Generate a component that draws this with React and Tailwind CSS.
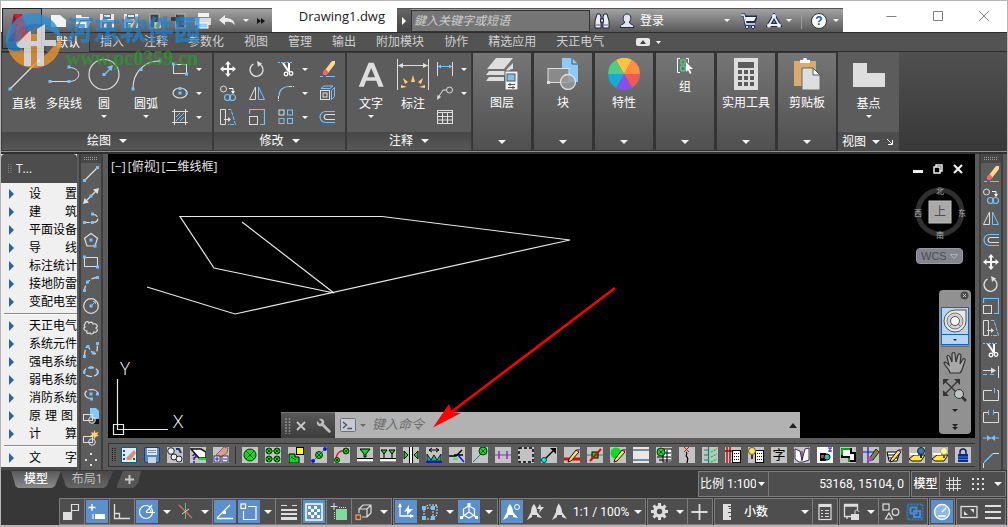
import React from "react";

const W = "#dedede";
const B = "#74c3ff";
const G = "#00e020";

function Svg({ s = 16, w, h, children, className = "" }) {
  return (
    <svg
      width={w || s}
      height={h || s}
      viewBox={`0 0 ${w || s} ${h || s}`}
      fill="none"
      className={`block shrink-0 ${className}`}
      aria-hidden="true"
    >
      {children}
    </svg>
  );
}

const Dot = ({ x, y, c = B, r = 3 }) => <rect x={x - r / 2} y={y - r / 2} width={r} height={r} fill={c} />;

function Down({ w = 8, c = "#f4f4f4" }) {
  const h = Math.round(w / 2);
  return (
    <Svg w={w} h={h}>
      <path d={`M0 0H${w}L${w / 2} ${h}Z`} fill={c} />
    </Svg>
  );
}

/* ---------- 16px tool glyphs ---------- */
const T = {
  line: <><path d="M1.5 14.5 14.5 1.5" stroke={W} strokeWidth="1.3" /><Dot x={1.5} y={14.5} /><Dot x={14.5} y={1.5} /></>,
  xline: <><path d="M2 14 14 2" stroke={W} strokeWidth="1.3" /><path d="M0 16 1.5 10 6 14.500ZM16 0 14.500 6 10 1.500Z" fill={W} /><Dot x={8} y={8} /></>,
  pline: <><path d="M1.500 12.500H10M9 4.500c7-1 8 8 1 8" stroke={W} strokeWidth="1.200" strokeDasharray="6 2" /><Dot x={1.5} y={12.5} /><Dot x={9.5} y={12.5} /><Dot x={9.5} y={4} /></>,
  polygon: <><path d="M8 1.500 14.500 6.300 12 14H4L1.500 6.300Z" stroke={W} strokeWidth="1.2" /><Dot x={8} y={8} /><Dot x={12} y={14} /></>,
  rect: <><rect x="1.500" y="3.500" width="13" height="9" stroke={W} /><Dot x={1.5} y={3} /><Dot x={14.5} y={13} /></>,
  arc: <><path d="M1.500 14.500C2 7 7 2 14.500 1.500" stroke={W} strokeWidth="1.2" strokeDasharray="5 2" /><Dot x={1.5} y={14.5} /><Dot x={4.5} y={6} /><Dot x={14.5} y={1.5} /></>,
  circle: <><circle cx="8" cy="8" r="7.300" stroke={W} strokeWidth="1.2" /><path d="M9 7l3-3M10 3.500h2.500V6" stroke={B} /><Dot x={8} y={8} /></>,
  cloud: <path d="M2 4c0-3 4-3 4-1 2-2 4 0 4 1 3-1 6 2 3 4 3 2 0 5-2 4-1 3-4 2-4 1-2 1-4 0-3-2-3 0-4-3-2-4-1-1-1-3 0-3Z" stroke={W} strokeWidth="1.2" />,
  spline: <><path d="M1.500 14C2 5 4 3 6 6s5 8 7 5 1-6 1.500-9" stroke={W} strokeWidth="1.2" strokeDasharray="6 2" /><Dot x={1.5} y={14.5} /><Dot x={5} y={4.5} /><Dot x={10.5} y={11} /><Dot x={14.5} y={1.5} /></>,
  ellipse: <><ellipse cx="8" cy="8" rx="7" ry="4.500" stroke={W} strokeWidth="1.2" strokeDasharray="6 2" /><Dot x={1} y={8} /><Dot x={15} y={8} /><Dot x={8} y={3.5} /></>,
  ellarc: <><path d="M8 12.500C0 12 0 4 8 3.500c4 0 7 2 7 5" stroke={W} strokeWidth="1.2" strokeDasharray="12 2" /><Dot x={8} y={8} /><Dot x={8.500} y={13} /><Dot x={14.5} y={8} /></>,
  insert: <><path d="M7 0h6l3 3v8H9L7 8Z" fill="#86c9fb" /><path d="M12 11h4v5h-5Z" fill="#111" /><rect x=".5" y="6.500" width="9" height="6" stroke={W} /><circle cx="9" cy="12" r="3.300" stroke={W} /></>,
  block: <><rect x=".5" y="6.500" width="9" height="6" stroke={W} /><circle cx="9" cy="12" r="3.300" stroke={W} /><path d="M11.500 0l1 3 3-1-1.500 2.500L16 6l-3 .5-1.500 2.500-1-2.500L7 6l2-1.500L8 2l2.500 1Z" fill="#ffd36b" /></>,
  point: <g fill={W}><rect x="7" y="1" width="2" height="2" /><rect x="2" y="7" width="2" height="2" /><rect x="12" y="7" width="2" height="2" /><rect x="7" y="12" width="2" height="2" /></g>,
  hatch: <><path d="M2.500 0v16M13.500 0v16M0 2.500h16M0 13.500h16" stroke={W} /><path d="M4 8l4-4M4 12l8-8M8 12l4-4" stroke={B} /></>,
  ellipse2: <><ellipse cx="8" cy="8" rx="7" ry="5" stroke={W} strokeWidth="1.2" /><Dot x={8} y={8} /><Dot x={15} y={8} /><Dot x={8} y={3.5} /></>,
  move: <path d="M8 0l3 3.500H9V7h3.500V5L16 8l-3.500 3V9H9v3.500h2L8 16l-3-3.500h2V9H3.500v2L0 8l3.500-3v2H7V3.500H5Z" fill="#f4f4f4" />,
  rotate: <><path d="M4.500 3A6.500 6.500 0 1 0 14 9.500C14 6 12 3.500 9.500 2.800" stroke={W} strokeWidth="1.300" /><path d="M8 0l5 2.500L9 6Z" fill={W} /></>,
  trim: <><path d="M0 1.500h14" stroke={B} strokeDasharray="2 1" /><path d="M5 2l6 9M11 2v9" stroke="#fff" strokeWidth="2" /><circle cx="8" cy="13" r="1.800" stroke="#fff" strokeWidth="1.300" /><circle cx="13" cy="12.500" r="1.800" stroke="#fff" strokeWidth="1.300" /></>,
  erase: <><path d="M1 15.500h3M7 15.500h9" stroke={B} /><path d="M6 9 13 0h3v3L9 12Z" fill="#ffd98a" /><path d="M4 10.500 6.500 8 10 11.500 7.500 14C5 15 3 13 4 10.500Z" fill="#f26a5e" /></>,
  copy: <><circle cx="3.500" cy="4" r="3" stroke={W} /><path d="M9 3.500h4V7" stroke="#fff" /><path d="M11 6h4l-2 3Z" fill="#fff" /><circle cx="7.500" cy="12.500" r="3" stroke={B} strokeWidth="1.200" /><circle cx="12.500" cy="12.500" r="3" stroke={B} strokeWidth="1.200" /></>,
  mirror: <><path d="M6.500 2v12.500h-6Z" stroke={W} /><path d="M9.500 2v12.500h6Z" stroke={B} /></>,
  fillet: <><path d="M1 11C1 5 5 1.500 11 1.500" stroke={B} strokeWidth="1.200" /><path d="M.5 11v5M11 1.500h5" stroke={W} strokeDasharray="3 1" /></>,
  explode: <><rect x="1.500" y="5.500" width="9" height="9" stroke={W} /><rect x="4" y="8" width="4" height="4" stroke={W} /><path d="M2 3.500 5 1h9l-3 2.500ZM12.500 5.500l3-3v9l-3 3Z" stroke={B} /></>,
  stretch: <><path d="M.5.500h5v15h-5ZM4 10.500h6" stroke={W} /><path d="M8 8l3 2.500L8 13Z" fill={W} /><path d="M8 .500h3l4.500 15H8" stroke={B} strokeDasharray="4 1" /></>,
  scale: <><path d="M.5 5V.500h15v15H11" stroke={B} strokeWidth="1.200" /><rect x=".5" y="7.500" width="8" height="8" stroke={W} /></>,
  array: <><rect x="1" y="1" width="5" height="5" stroke={W} /><rect x="9.500" y="1" width="5" height="5" stroke={B} /><rect x="1" y="9.500" width="5" height="5" stroke={B} /><rect x="9.500" y="9.500" width="5" height="5" stroke={B} /></>,
  offset: <><path d="M16 2.500H6.500a5.500 5.500 0 0 0 0 11H16" stroke={B} strokeWidth="1.200" /><path d="M16 5.500H7a2.600 2.600 0 0 0 0 5h9" stroke={W} strokeWidth="1.200" /></>,
  dim: <><path d="M.5 1v14M15.500 1v14" stroke={W} /><path d="M1 5.500h14" stroke={B} /><path d="M1 5.500l3-2v4ZM15 5.500l-3-2v4Z" fill={B} /></>,
  leader: <><circle cx="12.500" cy="5" r="3" stroke={W} /><path d="M9.500 5H6L1.500 12" stroke={W} /><path d="M0 15l.5-5L4 12Z" fill={W} /></>,
  table: <><rect x=".5" y="1.500" width="15" height="13" stroke={W} /><path d="M0 3.500h16M0 7.500h16M0 11h16M5.500 4v10M10.500 4v10" stroke={W} /></>,
  extend: <><path d="M15.500 2v12M0 6.500h9" stroke={W} /><path d="M8 3.500l5 3-5 3Z" fill={W} /><path d="M0 10.500h5M7 10.500h5" stroke={B} strokeDasharray="4 1" /></>,
  breakpt: <><path d="M9 4.500H.500v10h15v-10H14" stroke={W} /><path d="M11.500 2v5" stroke={B} /></>,
  brk: <><path d="M5 4.500H.500v10h15v-10H11" stroke={W} /><path d="M5.500 2v5M10.500 2v5" stroke={B} /></>,
  join: <><path d="M0 8h16" stroke={B} /><path d="M4 5l4 3-4 3ZM12 5 8 8l4 3Z" fill={B} /></>,
  chamfer: <><path d="M1 10.500 10 1.500" stroke={B} strokeWidth="1.200" /><path d="M10 1.500h6M.5 11v5" stroke={W} /></>,
};

function Tool({ n, label, className = "" }) {
  return (
    <button type="button" aria-label={label || n} className={`flex items-center justify-center ${className}`}>
      <Svg>{T[n]}</Svg>
    </button>
  );
}

/* ---------- title bar ---------- */
const Floppy = ({ c }) => (
  <><path d="M1 1h14v14H1Z" fill="#e8e8e8" /><rect x="4" y="1" width="8" height="5" fill="#707070" /><rect x="5" y="2" width="6" height="2" fill="#e8e8e8" /><rect x="3" y="9" width="10" height="6" fill="#7a7a7a" /><rect x="5" y="10" width="3" height="5" fill="#e8e8e8" />{c}</>
);
const pencil = <path d="M6 13 12 6l3 2-6 7H6Z" fill="#f5c469" stroke="#6a5a3a" strokeWidth=".5" />;

const quick = [
  ["新建", <path key="a" d="M0 2h9l6 5v7H0Z" fill="#f2f2f2" />],
  ["打开", <path key="a" d="M1 2h5l1 2h7v3H5l-3 7H1ZM6 8h10l-3 7H3Z" fill="#f2f2f2" />],
  ["保存", <Floppy key="a" />],
  ["另存为", <Floppy key="a" c={pencil} />],
  ["从移动设备打开", <g key="a"><rect x="3" y="1" width="9" height="14" fill="#404040" stroke="#bbb" /><path d="M7 9h7v6H7Z" fill="#f5c469" /></g>],
  ["保存到移动设备", <g key="a"><rect x="5" y="1" width="9" height="14" fill="#555" stroke="#bbb" /><path d="M0 4h5V1l5 5-5 5V8H0Z" fill="#3d3d3d" /></g>],
  ["打印", <g key="a"><rect x="3" y="0" width="11" height="4" fill="#f2f2f2" /><path d="M0 5h16v7H0Z" fill="#dadada" /><rect x="3" y="10" width="10" height="5" fill="#8cd0ff" stroke="#fff" /></g>],
  ["放弃", <path key="a" d="M0 7 6 2v3c6 0 9 2 10 7-3-3-5-4-10-3v3Z" fill="#ececec" />],
];

function TitleBar() {
  return (
    <div className="flex h-[31px] items-end bg-white">
      <div className="ml-px flex h-6 w-[270px] items-center border-t border-[#555] bg-gradient-to-b from-[#a3a3a3] to-[#5d5d5d] pl-[45px]">
        {quick.map(([l, g]) => (
          <button key={l} type="button" aria-label={l} className="flex h-5 w-[24px] items-center justify-center">
            <Svg>{g}</Svg>
          </button>
        ))}
        <button type="button" aria-label="放弃列表" className="ml-1"><Down w={6} /></button>
        <button type="button" aria-label="更多" className="ml-2">
          <Svg w={8} h={6}><path d="M0 0l4 3-4 3ZM4 0l4 3-4 3Z" fill="#111" /></Svg>
        </button>
      </div>
      <h1 className="flex h-full min-w-0 flex-1 items-center justify-end truncate pr-3 font-['Open_Sans','Noto_Sans_CJK_SC',sans-serif] text-[13px] text-[#1a1a1a]">
        Drawing1.dwg
      </h1>
      <div className="flex h-6 w-[446px] items-center border-t border-[#555] bg-gradient-to-b from-[#a3a3a3] to-[#585858]">
        <button type="button" aria-label="展开搜索" className="flex h-full w-[14px] items-center justify-center bg-gradient-to-b from-[#666] to-[#444]">
          <Svg w={4} h={8}><path d="M0 0l4 4-4 4Z" fill="#fff" /></Svg>
        </button>
        <input
          aria-label="搜索"
          placeholder="鍵入关键字或短语"
          className="h-[22px] w-[179px] border border-[#333] bg-[#757575] px-[2px] text-xs italic placeholder:text-[#cfcfcf]"
        />
        <button type="button" aria-label="查找" className="ml-1 w-4">
          <Svg><g stroke="#1e2533" fill="#e9ecf2"><path d="M3 1h3l1 3v11H1V8ZM10 1h3l2 7v7H9V4Z" /><rect x="6.500" y="6" width="3" height="3" /></g><path d="M2 12h4M10 12h4" stroke="#58627a" /></Svg>
        </button>
        <button type="button" className="ml-[9px] flex items-center gap-[5px] text-xs text-white">
          <Svg><path d="M1 14.500c0-3 3-3 4.500-4.500v-1C3 6 4 1 8 1s5 5 2.500 8v1c1.500 1.500 4.500 1.500 4.500 4.500Z" fill="#dfe5f0" stroke="#1e2a48" /></Svg>
          登录
        </button>
        <button type="button" aria-label="帐户" className="ml-auto"><Down w={6} /></button>
        <button type="button" aria-label="商店" className="ml-[11px]">
          <Svg><path d="M0 2h3l2 9h9M4 4h11l-2 5H5" stroke="#1c2b5a" strokeWidth="3" /><path d="M0 2h3l2 9h9" stroke="#f2f4fa" strokeWidth="1.300" /><path d="M4 4h11l-2 4H5Z" fill="#f2f4fa" /><circle cx="6" cy="14" r="1.600" fill="#fff" stroke="#1c2b5a" /><circle cx="12" cy="14" r="1.600" fill="#fff" stroke="#1c2b5a" /></Svg>
        </button>
        <button type="button" aria-label="Autodesk 应用" className="ml-[9px]">
          <Svg><path d="M8 3 3 12h10Z" stroke="#1c2b5a" strokeWidth="4" /><path d="M8 3 3 12h10Z" stroke="#eef1f8" strokeWidth="1.800" /><circle cx="8" cy="3" r="2" fill="#eef1f8" /><circle cx="3" cy="12.500" r="2" fill="#eef1f8" /><circle cx="13" cy="12.500" r="2" fill="#eef1f8" /></Svg>
        </button>
        <button type="button" aria-label="应用列表" className="ml-1"><Down w={6} /></button>
        <span className="ml-[9px] h-4 w-px bg-[#999]" />
        <button type="button" aria-label="帮助" className="ml-[9px] flex size-4 items-center justify-center rounded-full border border-[#333] bg-white font-['Liberation_Sans',sans-serif] text-xs font-bold text-[#1556c4]">?</button>
        <button type="button" aria-label="帮助列表" className="ml-[6px] mr-1"><Down w={6} /></button>
      </div>
      <div className="ml-[26px] flex h-full items-center">
        {[
          ["最小化", "M.5 6.500h10"],
          ["最大化", "M1.500 1.500h9v9h-9Z"],
          ["关闭", "M1 1l10 10M11 1 1 11"],
        ].map(([l, d]) => (
          <button key={l} type="button" aria-label={l} className="flex h-full w-[46px] items-center justify-center pb-[2px]">
            <Svg s={12}><path d={d} stroke="#808080" /></Svg>
          </button>
        ))}
      </div>
    </div>
  );
}

/* ---------- ribbon ---------- */
function Footer({ children }) {
  return (
    <button type="button" className="flex h-[18px] w-full items-center justify-center gap-2 bg-gradient-to-b from-[#474747] to-[#575757] text-xs leading-none text-white">
      {children}
      <Down />
    </button>
  );
}

function Big({ label, icon, arrow, className = "w-10" }) {
  return (
    <button type="button" className={`flex flex-col items-center pt-[6px] text-xs text-white ${className}`}>
      <Svg s={32}>{icon}</Svg>
      <span className="mt-[5px] whitespace-nowrap leading-4">{label}</span>
      {arrow && <span className="mt-[3px]"><Down w={6} /></span>}
    </button>
  );
}

function Small({ n, arrow = true }) {
  return (
    <div className="flex h-6 items-center">
      <Tool n={n} />
      {arrow ? <button type="button" aria-label="更多选项" className="ml-2 w-[6px]"><Down w={6} /></button> : <span className="ml-2 w-[6px]" />}
    </div>
  );
}

const big = {
  line: <><path d="M2 30 30 2" stroke={W} strokeWidth="1.300" /><Dot x={2} y={30} /><Dot x={31} y={1.5} /></>,
  pline: <><path d="M2 22.500h19M21 8.500c13 0 13 14 0 14" stroke={W} /><Dot x={2} y={22.5} /><Dot x={21} y={22.5} /><Dot x={21} y={8} /></>,
  circle: <><circle cx="16" cy="15.500" r="15" stroke={W} strokeWidth="1.200" /><path d="M16 16l6-6" stroke={B} strokeWidth="1.300" /><path d="M25 6l-1.500 6L19 8Z" fill={B} /><Dot x={16} y={15.5} /></>,
  arc: <><path d="M3 29C3 14 14 2 29 2" stroke={W} strokeWidth="1.200" /><Dot x={3} y={30} /><Dot x={11} y={10.5} /><Dot x={30} y={2} /></>,
  text: <path d="M13.500 2h6L31 30h-6l-2.500-7h-12L8 30H2ZM16.500 8 12 19h9Z" fill={W} fillRule="evenodd" transform="translate(2 2) scale(.86)" />,
  dim: <><path d="M.500 0v31M31.500 0v31M1 6.500h30" stroke={W} /><path d="M1 6.500l5-2.500v5ZM31 6.500 26 4v5Z" fill={W} /><path d="M14 23l2-7 2 7ZM8 25l-2-6 5 4ZM24 25l2-6-5 4ZM4 29v-3l6 2ZM28 29v-3l-6 2Z" fill="#ffd36b" /></>,
  layers: <><path d="M10 0h17l-9 11H1ZM3 13h16l8-8v4l-8 8H0ZM3 19h15v4H0ZM20 12l7-5v4Z" fill={W} /><rect x="19" y="13" width="13" height="19" fill="#f2f2f2" stroke="#5a5a5a" /><rect x="21" y="16" width="8" height="7" fill={B} stroke="#555" /><path d="M22 26.500h7M22 29.500h7M24 25v3M27 28v3" stroke="#555" /></>,
  block: <><path d="M15 0h10l6 6v18H15Z" fill="#8acbfb" /><path d="M25 0v6h6" stroke="#555" /><rect x="1" y="10.500" width="21" height="14" fill="#8a8a8a" stroke={W} /><circle cx="21" cy="24" r="7.500" fill="#9a9a9a" fillOpacity=".8" stroke={W} strokeWidth="1.300" /><rect x="0" y="23" width="3" height="3" fill={W} /></>,
  props: (
    <g>
      <path d="M16 16 8 2.100A16 16 0 0 1 24 2.100Z" fill="#ffc341" />
      <path d="M16 16 24 2.100A16 16 0 0 1 32 16Z" fill="#ff8f40" />
      <path d="M16 16H32A16 16 0 0 1 24 29.900Z" fill="#ec5a5a" />
      <path d="M16 16 24 29.900A16 16 0 0 1 8 29.900Z" fill="#8450f2" />
      <path d="M16 16 8 29.900A16 16 0 0 1 0 16Z" fill="#15aed0" />
      <path d="M16 16H0A16 16 0 0 1 8 2.100Z" fill="#4ccf82" />
    </g>
  ),
  calc: <><rect x="4" y="0" width="24" height="32" fill={W} /><path d="M8 4h16v6H8ZM8 12h4v4H8ZM14 12h4v4h-4ZM20 12h4v4h-4ZM8 18h4v4H8ZM14 18h4v4h-4ZM20 18h4v4h-4ZM8 24h4v4H8ZM14 24h4v4h-4ZM20 24h4v4h-4Z" fill="#5a5a5a" /></>,
  paste: <><rect x="3" y="3" width="22" height="25" fill="#d8ab70" /><path d="M9 2h3c0-3 4-3 4 0h3v3H9Z" fill="#fff" /><path d="M11 10h11l7 7v15H11Z" fill={W} stroke="#666" /><path d="M22 10v7h7Z" fill="#fff" stroke="#555" /></>,
  base: <path d="M0 4h14v10h18v14H0Z" fill={W} />,
};

const collapsed = [
  ["图层", "layers"], ["块", "block"], ["特性", "props"], ["组", null], ["实用工具", "calc"], ["剪贴板", "paste"],
];

const panel = "flex flex-col border border-[#3a3a3a] bg-[#5c5c5c]";

function Ribbon() {
  return (
    <div className="border-b-2 border-[#303030] bg-gradient-to-b from-[#505050] to-[#383838]">
      <div className="flex h-[99px]">
        <section className={`${panel} w-[212px]`}>
          <div className="flex flex-1 pl-[2px]">
            <Big label="直线" icon={big.line} />
            <Big label="多段线" icon={big.pline} />
            <Big label="圆" icon={big.circle} arrow />
            <Big label="圆弧" icon={big.arc} arrow className="w-[44px]" />
            <div className="ml-1 pt-1">
              <Small n="rect" /><Small n="ellipse2" /><Small n="hatch" />
            </div>
          </div>
          <Footer>绘图</Footer>
        </section>
        <section className={`${panel} w-[133px]`}>
          <div className="flex flex-1 pl-[6px] pt-1">
            <div className="w-[29px]"><Small n="move" arrow={false} /><Small n="copy" arrow={false} /><Small n="stretch" arrow={false} /></div>
            <div className="w-[29px]"><Small n="rotate" arrow={false} /><Small n="mirror" arrow={false} /><Small n="scale" arrow={false} /></div>
            <div className="w-[41px]"><Small n="trim" /><Small n="fillet" /><Small n="array" /></div>
            <div className="w-4"><Small n="erase" arrow={false} /><Small n="explode" arrow={false} /><Small n="offset" arrow={false} /></div>
          </div>
          <Footer>修改</Footer>
        </section>
        <section className={`${panel} w-[126px]`}>
          <div className="flex flex-1 pl-[3px]">
            <Big label="文字" icon={big.text} arrow className="w-[42px]" />
            <Big label="标注" icon={big.dim} className="w-[42px]" />
            <div className="ml-[3px] pt-1">
              <Small n="dim" /><Small n="leader" /><Small n="table" arrow={false} />
            </div>
          </div>
          <Footer>注释</Footer>
        </section>
        {collapsed.map(([label, k]) => (
          <section key={label} className="w-[61px] border border-r-2 border-[#343434] bg-gradient-to-b from-[#767676] to-[#505050]">
            <button type="button" className="flex h-full w-full flex-col items-center pb-[6px] pt-[5px] text-xs text-white">
              {k ? (
                <Svg s={32}>{big[k]}</Svg>
              ) : (
                <Svg><path d="M3 .500H.500v14H3M9 .500h2.500V5" stroke="#fff" /><rect x="4" y="2" width="4" height="4" stroke="#4ccf82" strokeWidth="1.300" /><circle cx="6" cy="10.500" r="2.500" stroke="#4ccf82" strokeWidth="1.300" /><path d="M9 4v10l2-2 2 4 1.500-1-2-4H16Z" fill="#fff" /></Svg>
              )}
              <span className="mt-[5px] whitespace-nowrap leading-4">{label}</span>
              <span className="mt-auto"><Down /></span>
            </button>
          </section>
        ))}
        <section className="flex w-[61px] flex-col bg-[#5c5c5c]">
          <div className="flex flex-1 justify-center pt-px"><Big label="基点" icon={big.base} arrow /></div>
          <div className="flex h-[19px] items-center bg-[#4d4d4d]">
            <button type="button" className="ml-1 flex items-center gap-[6px] text-xs text-white">视图 <Down /></button>
            <button type="button" aria-label="视图设置" className="ml-[7px]"><Svg s={6}><path d="M0 0l5 5M5.500 1v4.500H1" stroke="#fff" /></Svg></button>
          </div>
        </section>
      </div>
      <div className="h-px bg-[#8d8d8d]" />
    </div>
  );
}

/* ---------- workspace ---------- */
const menu = [
  "设 置", "建 筑", "平面设备", "导 线", "标注统计", "接地防雷", "变配电室", null,
  "天正电气", "系统元件", "强电系统", "弱电系统", "消防系统", "原 理 图", "计 算", null, "文 字",
];

function Palette() {
  return (
    <aside className="flex w-[76px] shrink-0 flex-col overflow-hidden bg-[#f0f0f0]">
      <div className="flex h-[29px] items-center rounded-t bg-[#4d4d4d] pl-[7px] font-['Open_Sans',sans-serif] text-xs text-[#eee]">
        <Svg w={4} h={10}><path d="M.500 0v10M3 0v10" stroke="#888" strokeDasharray="1 1" /></Svg>
        <span className="ml-1">T...</span>
      </div>
      <ul className="pt-[2px]">
        {menu.map((m, i) =>
          m === null ? (
            <li key={i} className="flex h-[6px] items-center pl-[3px]"><span className="h-[2px] w-full border-t border-[#8a8a8a] bg-white" /></li>
          ) : (
            <li key={m}>
              <button type="button" className="flex h-[18px] w-full items-center pl-2 text-xs text-black">
                <Svg w={5} h={10}><path d="M0 0l5 5-5 5Z" fill="#2a64a0" /></Svg>
                <span className={`ml-[15px] flex shrink-0 justify-between whitespace-nowrap ${m.split(" ").length === 3 ? "w-11" : "w-12"}`}>
                  {m.split(" ").map((c) => <span key={c}>{c}</span>)}
                </span>
              </button>
            </li>
          )
        )}
      </ul>
      <div className="mt-auto h-[3px] bg-[#4a4a4a]" />
    </aside>
  );
}

function VBar({ items, label }) {
  return (
    <div aria-label={label} role="toolbar" className="-mb-px flex w-6 shrink-0 flex-col items-stretch overflow-hidden border-x-2 border-[#3f3f3f] bg-[#5c5c5c]">
      <div className="flex h-[9px] items-center justify-center bg-[#474747]">
        <Svg w={14} h={4}><path d="M0 .500h14M0 2.500h14" stroke="#999" strokeDasharray="1 1" /></Svg>
      </div>
      {items.map((n) => <Tool key={n} n={n} className="h-[22px]" />)}
    </div>
  );
}

function CommandLine() {
  return (
    <form className="absolute bottom-0 left-[173px] right-[175px] flex h-[26px] bg-[#b2b2b2]">
      <div className="flex w-[54px] items-center border-t border-[#777] bg-gradient-to-b from-[#585858] to-[#3c3c3c] pl-1">
        <Svg w={6} h={16}><path d="M1 0v16M4.500 0v16" stroke="#8c8c8c" strokeWidth="1.500" strokeDasharray="2 1" /></Svg>
        <button type="button" aria-label="关闭命令行" className="ml-[5px]"><Svg s={10}><path d="M1 1l8 8M9 1 1 9" stroke="#c4c4c4" strokeWidth="2" /></Svg></button>
        <button type="button" aria-label="自定义" className="ml-[10px]">
          <Svg><path d="M3 1l3 3-2 2L1 3c-1 4 2 6 5 5l6 6c2 2 4 0 2-2L8 6c1-3-1-6-5-5Z" fill="#bdbdbd" /></Svg>
        </button>
      </div>
      <button type="button" aria-label="最近命令" className="ml-[5px] flex items-center gap-1">
        <Svg w={16} h={14}><rect x=".5" y=".5" width="15" height="13" rx="1" fill="#c5cad3" stroke="#6a7280" /><path d="M3 4l3.500 3L3 10M7.500 10.500H12" stroke="#4a525e" strokeWidth="1.300" /></Svg>
        <Down w={6} c="#666" />
      </button>
      <input aria-label="命令" placeholder="键入命令" className="ml-[6px] min-w-0 flex-1 bg-transparent text-[13px] italic outline-none placeholder:text-[#6c6c6c]" />
      <button type="button" aria-label="历史" className="mr-[3px]"><Svg w={8} h={5}><path d="M0 5h8L4 0Z" fill="#222" /></Svg></button>
    </form>
  );
}

function Compass() {
  return (
    <div className="absolute right-[8px] top-[31px]">
      <svg width="54" height="54" viewBox="0 0 54 54" className="block font-['Noto_Sans_CJK_SC',sans-serif] text-[8px]" aria-label="视图方位">
        <circle cx="27" cy="27" r="22" fill="none" stroke="#2f2f2f" strokeWidth="5" />
        <rect x="16" y="16" width="22" height="22" fill="#a9a9a9" stroke="#bdbdbd" />
        <g fill="#b4b4b4" textAnchor="middle"><text x="27" y="9">北</text><text x="5" y="31">西</text><text x="49" y="31">东</text><text x="27" y="53">南</text></g>
        <text x="27" y="31" fill="#4e4e4e" textAnchor="middle" className="text-[12px]">上</text>
      </svg>
    </div>
  );
}

function NavBar() {
  return (
    <div className="absolute right-1 top-[136px] flex h-[144px] w-8 flex-col items-center rounded bg-[#919191]">
      <button type="button" aria-label="关闭导航栏" className="mr-[2px] mt-px self-end">
        <Svg s={9}><circle cx="4.500" cy="4.500" r="4" fill="#4a4a4a" /><path d="M3 3l3 3M6 3 3 6" stroke="#ccc" /></Svg>
      </button>
      <div className="mt-[7px] w-7 border border-[#0f66c4] bg-[#b9d4f0]">
        <button type="button" aria-label="全导航控制盘" className="flex h-[27px] w-full items-center justify-center border-b border-[#0f66c4]">
          <Svg s={24}><path d="M12 1h11v11A11 11 0 1 1 12 1Z" fill="#e9e9e9" stroke="#555" /><circle cx="12" cy="12" r="8" fill="#d2d2d2" stroke="#777" /><circle cx="12" cy="12" r="4.500" fill="#f4f4f4" stroke="#555" /><path d="M6 18l3-3M18 18l-3-3" stroke="#777" /></Svg>
        </button>
        <button type="button" aria-label="控制盘列表" className="flex h-[9px] w-full items-center justify-center"><Down w={4} c="#222" /></button>
      </div>
      <span className="mt-px h-px w-7 bg-[#6e6e6e]" />
      <button type="button" aria-label="平移" className="mt-1">
        <Svg s={24}><path d="M7 22c0-3-5-7-6-10 1-2 3 0 5 2L4 6c0-2 2-2 3 0l2 5V3c0-2 3-2 3 0l1 8 2-7c1-2 3-1 3 1l-1 8 3-5c1-1 3 0 2 2-2 4-2 9-5 12Z" fill="#a8a8a8" stroke="#333" strokeWidth="1.200" /></Svg>
      </button>
      <button type="button" aria-label="范围缩放" className="mt-1">
        <Svg s={24}><path d="M2 2l13 13M15 2 2 15" stroke="#333" strokeWidth="1.300" /><path d="M0 0h6L0 6ZM17 0h-6l6 6ZM0 17v-6l6 6Z" fill="#333" /><circle cx="16" cy="15" r="4.500" fill="#bfc3c4" stroke="#333" /><path d="M19 18l4 4" stroke="#333" strokeWidth="2.500" /></Svg>
      </button>
      <button type="button" aria-label="缩放列表" className="mt-[6px]"><Down w={6} c="#222" /></button>
      <button type="button" aria-label="更多" className="mt-3"><Svg w={6} h={6}><path d="M0 0h6L3 3ZM0 3h6L3 6Z" fill="#222" /></Svg></button>
    </div>
  );
}

function Canvas() {
  return (
    <div className="relative min-h-[284px] flex-1 overflow-hidden bg-black">
      <svg className="absolute left-0 top-0 block h-full w-full" fill="none" aria-label="图形">
        <g stroke="#e8e8e8" strokeWidth="1.200">
          <path d="M134 68 226 139 106 114 72 62.500H274L462 86 127 160 39 133" />
          <path d="M5.500 270.500h10v10h-10ZM9.500 276v-51M10 275.500h50" />
        </g>
        <g fill="#fff" className="font-['Open_Sans',sans-serif] text-[19px] font-light">
          <text x="12" y="221">Y</text>
          <text x="65" y="274">X</text>
        </g>
      </svg>
      <div className="absolute left-[3px] top-[5px] flex gap-[2px] font-['Open_Sans','Noto_Sans_CJK_SC',sans-serif] text-xs leading-4 text-[#e4e4e4]">
        <button type="button">[−]</button><button type="button">[俯视]</button><button type="button">[二维线框]</button>
      </div>
      <div className="absolute right-3 top-[10px] flex items-center gap-[10px]">
        <button type="button" aria-label="最小化视口"><Svg s={10}><path d="M0 6h10v3H0Z" fill="#eee" /></Svg></button>
        <button type="button" aria-label="还原视口"><Svg s={10}><rect x="3" y="1" width="6" height="6" stroke="#eee" strokeWidth="1.500" /><rect x="1" y="3" width="6" height="6" fill="#000" stroke="#eee" strokeWidth="1.500" /></Svg></button>
        <button type="button" aria-label="关闭视口"><Svg s={10}><path d="M1 1l8 8M9 1 1 9" stroke="#eee" strokeWidth="2.200" /></Svg></button>
      </div>
      <Compass />
      <button type="button" className="absolute right-3 top-[94px] flex h-4 w-[47px] items-center justify-between rounded border border-[#9a9aa4] bg-[#85858f] px-1 font-['Liberation_Sans',sans-serif] text-[11px] text-[#4c4c54]">
        WCS
        <Svg w={8} h={5}><path d="M.500.500h7L4 4.500Z" stroke="#b0b0bb" /></Svg>
      </button>
      <NavBar />
      <CommandLine />
      <svg className="pointer-events-none absolute left-0 top-0 block h-full w-full" fill="none" aria-hidden="true">
        <path d="M507 134 342 259" stroke="#f00" strokeWidth="2.500" />
        <path d="M325 273.500 341 250l3 8 9 1Z" fill="#f00" />
      </svg>
    </div>
  );
}

/* ---------- drawing-plugin toolbar ---------- */
const Lamp = ({ x = 8, y = 8, r = 3 }) => (
  <g stroke="#003800"><circle cx={x} cy={y} r={r} fill={G} /><path d={`M${x - r * 0.6} ${y - r * 0.6}l${r * 1.2} ${r * 1.2}M${x + r * 0.6} ${y - r * 0.6}l${-r * 1.2} ${r * 1.2}`} /></g>
);
const Calc = () => <><rect x="7.500" y="3.500" width="8" height="12" fill="#fff" stroke="#000" /><path d="M9 6.500h5M9 9.500h5M9 12.500h5" stroke="#000" strokeDasharray="1 1" /></>;
const Pen = () => <><path d="M5 12 12 3l3 2-8 9-3 1Z" fill="#ffe34a" stroke="#111" /><path d="M12 2l3 3 1-3Z" fill="#a03aa0" /></>;
const Layer = () => <><path d="M0 12 5 8h11l-4 6H3Z" fill="#ffeb3b" stroke="#111" /><path d="M1 7h8" stroke="#fff" strokeWidth="2" /></>;

const draw1 = [
  <><rect x=".5" y=".5" width="15" height="15" fill="#dceefa" stroke="#0b5a94" /><path d="M2 3h2v2H2ZM2 7h2v2H2ZM2 11h2v2H2ZM12 11h2v2h-2Z" fill="#0b5a94" /><path d="M5 11 13 3l2 3-5 7H6Z" fill="#dc8e76" /></>,
  <><path d="M.5.500h15v15h-15Z" fill="#4f86c6" stroke="#1b3d78" /><rect x="3" y="1" width="10" height="7" fill="#dbe6f4" /><rect x="4" y="10" width="8" height="6" fill="#cfd4dc" /><path d="M4 3.500h8M4 5.500h8" stroke="#7f94b4" /></>,
  <><circle cx="4" cy="4" r="3.300" fill="#e8eef4" stroke="#222" /><path d="M9 2h3l2 4" stroke="#143a6b" strokeWidth="2" /><circle cx="7" cy="10" r="3" fill="#e8eef4" stroke="#222" /><circle cx="12" cy="12" r="3" fill="#e8eef4" stroke="#222" /></>,
  <><path d="M1 2h10l5 3v6H9Z" fill="#fff" stroke="#111" strokeWidth="1.500" /><path d="M9 11h7v2H9Z" fill={G} /><path d="M3 9c0-2 4-2 3 1l-2 1v2M4 14v2" stroke="#1b1be0" strokeWidth="1.500" /></>,
  <><path d="M3 8 11 0l4 1-1 5-6 4Z" fill="#dc9c90" stroke="#865" /><rect x="1" y="9" width="6" height="6" fill="#f0f0ff" stroke="#334" /><rect x="9" y="9" width="6" height="6" fill="#f0f0ff" stroke="#334" /><path d="M2 12h4M4 10v4M10 12h4" stroke="#22c" /></>,
];
const draw2 = [
  <Lamp x={8} y={8} r={6} />,
  <><path d="M4 4h8M4 12h8" stroke="red" /><Lamp x={4} y={4} /><Lamp x={12} y={4} /><Lamp x={4} y={12} /><Lamp x={12} y={12} /></>,
  <><rect x="8.500" y=".5" width="7" height="7" fill="#ff0" stroke="#000" /><path d="M1 7h6v3h4v6H1Z" fill={G} stroke="#000" /><path d="M3 10l5 3" stroke="#000" /></>,
  <><path d="M2 14 14 2" stroke="#088" /><Lamp x={8} y={8} r={3.5} /><circle cx="14" cy="2" r="2" fill="#11e" /><circle cx="2" cy="14" r="2" fill="#11e" /></>,
  <><path d="M2 12C3 5 7 3 12 4" stroke="#e01010" strokeWidth="1.500" /><Lamp x={12} y={4} /><Lamp x={3} y={13} r={2.5} /></>,
  <><path d="M3 2h10L9 7v3H7V7Z" fill={G} stroke="#000" /><path d="M0 11.500h16M0 15h16" stroke="#000" /><path d="M0 13.300h16" stroke="#fff" strokeWidth="2" /></>,
  <><path d="M1 3h6L4 7ZM9 3h6l-3 4Z" fill={G} stroke="#000" /><path d="M4 6v5M12 6v5M0 11.500h16M0 15h16" stroke="#000" /><path d="M0 13.300h16" stroke="#fff" strokeWidth="2" /></>,
  <><path d="M6.500 0v16M9.500 0v16" stroke="#000" /><path d="M7 0h2v16H7Z" fill="#fff" /><path d="M1 4v8l4-4ZM15 4v8l-4-4Z" fill={G} stroke="#000" /></>,
  <><path d="M3 3h10M3 3l3-2M3 3l3 2M13 3l-3-2M13 3l-3 2" stroke="#000" /><path d="M1 7l4 6 3-5 3 5 4-6v7H1Z" fill="#18c060" stroke="#113" /><path d="M0 15h16" stroke="#11e" strokeWidth="2" /></>,
  <><path d="M0 9h7l6-6M5 8h9" stroke="#000" strokeWidth="1.500" /><path d="M9 8l6 7" stroke="#11e" strokeWidth="1.500" /><path d="M4 12h5" stroke={G} /></>,
  <><path d="M1 15 11 5" stroke="#088" /><Lamp x={11} y={4} r={4} /></>,
  <><path d="M0 8h16" stroke="#088" /><path d="M4 4v8M12 4v8" stroke="#d0d" strokeWidth="1.500" /></>,
  <rect x="1" y="1" width="14" height="14" stroke="#000" strokeWidth="1.500" strokeDasharray="3 2" />,
  <><path d="M4 12l9-9" stroke="#000" strokeWidth="1.500" /><path d="M15 1v6L9 1Z" fill="#000" /><circle cx="3" cy="13" r="2.500" fill="#0ee" stroke="#044" /></>,
  <><path d="M0 12h16" stroke="#e00" strokeWidth="3" /><Pen /></>,
  <><path d="M0 8h16" stroke="#088" /><rect x="5" y="5" width="6" height="6" fill={G} stroke="#000" /><path d="M3 14 14 2" stroke="#e00" strokeWidth="2" /></>,
  <><circle cx="6" cy="6" r="5.500" fill={G} /><Pen /></>,
  <><rect width="16" height="16" fill="#eee6dc" /><path d="M0 3h16M0 13h16" stroke="#6c8cb0" strokeWidth="2" /></>,
  <><rect x="7" y="2" width="9" height="13" fill="#fff" stroke="#000" /><path d="M1 10h14M3 13h12M11 3v12M7 6h8" stroke="#000" /><Lamp x={5} y={5} r={4} /></>,
  <><path d="M7 5c3 2-2 3 1 5 2 2 0 4 0 6" stroke="#000" strokeWidth="1.200" /><path d="M5 0l5 5M10 0 5 5" stroke="#e00" /></>,
  <><path d="M2 3h5M2 8h5M2 13h5M6.500 0v16" stroke="#088" strokeWidth="1.200" /><path d="M9 5l6-3M9 10l6-3M9 15l6-3" stroke={G} strokeWidth="1.500" strokeDasharray="2 1" /></>,
  <><path d="M2 0v16M5 0v16M0 4h9" stroke="#900" strokeWidth="1.300" /><Calc /></>,
  <><Calc /><circle cx="4" cy="4" r="3.500" fill="#ffe34a" stroke="#554" /><path d="M4 8v4" stroke="#333" strokeWidth="2" /></>,
  null,
  <><path d="M1 2l5 2 2 9 3-11 4-1v12l-6 2H5l-4-3Z" fill="#fff" stroke="#425" /><path d="M8 4v10" stroke="#425" /></>,
  <><rect width="16" height="16" fill="#fff" /><path d="M3 6h6v8H3Z" fill="#000" /><path d="M4 8h3v3H4Z" fill="#e33" /><circle cx="10" cy="10" r="3" fill="#0cc" stroke="#000" /><path d="M11 1h4M11 4h4M13 1v4" stroke="#11e" /></>,
  <><path d="M2 2h9v4h4v8H9v-4H2Z" stroke="#000" strokeWidth="2" fill="#fff" /><path d="M2 8V2h8M9 11v4" stroke={G} strokeWidth="1.500" /></>,
  <><path d="M5 0v16M0 5h16" stroke="#11e" strokeWidth="1.200" /><path d="M6 12 13 2l3 3-6 8Z" fill="#7a8a2a" stroke="#222" /><circle cx="7" cy="12" r="2.500" fill="#a050b0" /></>,
  <><path d="M1 5h13l-3 9H3Z" fill="#fff" stroke="#000" /><path d="M1 8h12M2 11h10" stroke="#000" /><Pen /></>,
  <><Layer /><circle cx="12" cy="4" r="3.500" fill="#3a76a8" stroke="#123" /><path d="M12 8v3" stroke="#123" strokeWidth="2" /></>,
  <><Layer /><circle cx="12" cy="4" r="3.500" fill="#fff79a" stroke="#aa8" /><path d="M12 8v3" stroke="#554" strokeWidth="2" /></>,
  <><path d="M5 7V5c0-4 6-4 6 0v2" stroke="#0b2270" strokeWidth="1.500" /><rect x="3" y="7" width="10" height="8" fill="#0b2a90" /><path d="M3 10h10M3 12.500h10" stroke="#5ad" strokeWidth=".7" /></>,
];

function Sq({ g, i }) {
  return (
    <button type="button" aria-label={g ? `电气工具 ${i}` : undefined} className="flex size-4 shrink-0 items-center justify-center bg-[#c3c3c3] text-[13px] leading-4 text-black">
      {g ? <Svg>{g}</Svg> : "字"}
    </button>
  );
}

function PluginBar() {
  return (
    <div role="toolbar" aria-label="电气" className="mb-[3px] mt-[5px] flex h-6 items-center gap-[7px] overflow-hidden border-y border-l border-[#333] bg-[#5c5c5c] pl-[3px]">
      <Svg w={4} h={14} className="-mr-[2px]"><path d="M.500 0v14M3 0v14" stroke="#111" strokeDasharray="1 1" /></Svg>
      {draw1.map((g, i) => <Sq key={i} g={g} i={i + 1} />)}
      <span className="-mx-px h-[18px] w-px shrink-0 border-l border-[#333] bg-[#888]" />
      {draw2.map((g, i) => <Sq key={i} g={g} i={i + 6} />)}
    </div>
  );
}

/* ---------- status ---------- */
const S = {
  model: <><path d="M0 9h9v8H0Z" fill={W} /><path d="M8.500 17V1.500h7v6h-7" stroke={W} strokeWidth="1.200" /></>,
  infer: <><path d="M4 1v7M.500 4.500h7" stroke="#fff" strokeWidth="1.300" /><rect x="7" y="11" width="10" height="5" fill="#fff" /><path d="M5 11v5" stroke="#fff" /></>,
  ortho: <path d="M1.500 1v14.500H17M1.500 10.500h5v5" stroke={W} strokeWidth="1.300" />,
  polar: <><circle cx="8" cy="9" r="6.500" stroke="#fff" strokeWidth="1.200" /><path d="M8 9.500h9M8 9l6-7" stroke="#fff" strokeWidth="1.200" /><path d="M11 6c2 1 2 3 2 4" stroke="#fff" /></>,
  iso: <><path d="M8.500 0v16" stroke="#4ccf6c" /><path d="M2 2l13 13" stroke="#e06a6a" strokeWidth="1.200" /><path d="M5 11l7-5" stroke={W} /></>,
  track: <><path d="M1 15.500h16M1 15 14 2" stroke="#fff" strokeWidth="1.300" /><rect x="7" y="8" width="3" height="3" fill="#fff" /></>,
  osnap: <><path d="M8 3.500h8v13H3.500V8" stroke="#fff" strokeWidth="1.200" /><rect x="1" y="1" width="4.500" height="4.500" stroke="#fff" strokeWidth="1.200" /></>,
  lwt: <path d="M1 2h16v1H1ZM1 6h16v2H1ZM1 10h16v2H1ZM1 14h16v3H1ZM6 2h1v1h5V2Z" fill={W} />,
  trans: <><rect x="1" y="1" width="16" height="16" stroke="#fff" strokeWidth="1.500" /><path d="M3 3h3v3H3ZM9 3h3v3H9ZM6 6h3v3H6ZM12 6h3v3h-3ZM3 9h3v3H3ZM9 9h3v3H9ZM6 12h3v3H6ZM12 12h3v3h-3Z" fill="#fff" /></>,
  cycle: <><path d="M4 0v7M.500 3.500h7" stroke={W} /><rect x="6" y="6" width="11" height="11" fill="#7fdc9f" /><path d="M9 4.500h8M4.500 9v8" stroke={W} strokeDasharray="1 1" /></>,
  osnap3d: <><path d="M4 6h8v8H7M4 10V6l4-4h8v8l-4 4M12 6l4-4" stroke={W} strokeWidth="1.200" /><rect x="1" y="12" width="4.500" height="4.500" stroke="#f09a50" strokeWidth="1.300" /></>,
  ducs: <><path d="M3 1v12h13" stroke="#fff" strokeWidth="1.300" /><path d="M1 4l2-4 2 4ZM13 11l4 2-4 2Z" fill="#fff" /><path d="M7 9l5-7v4h4l-6 6V8Z" fill="#fff" /></>,
  filter: <><path d="M3 5h9v11H3ZM3 5l4-3h9v10l-4 4M12 5l4-3" stroke={W} strokeDasharray="2 1" /><Dot x={3} y={5} r={4} /><Dot x={12} y={5} r={4} /><Dot x={3} y={15} r={4} /><Dot x={12} y={15} r={4} /></>,
  gizmo: <><path d="M9 1v8l7 5M9 9l-7 5" stroke="#fff" strokeWidth="1.200" /><path d="M9 3 14.500 6v6L9 15l-5.500-3V6Z" stroke="#fff" strokeWidth="1.200" /><rect x="7.500" y="0" width="3" height="3" fill="#fff" /><rect x="0" y="13" width="3" height="3" fill="#fff" /><rect x="15" y="13" width="3" height="3" fill="#fff" /></>,
  annoA: <><path d="M7 1c3 4 3 7 3 8l5 6-5-1v-2H5v2l-5 3 4-8c0-3 1-6 3-8Z" fill="#fff" /><circle cx="14" cy="4" r="2.500" stroke="#fff" /></>,
  annoB: <><path d="M7 1c3 4 3 7 3 8l5 6-5-1v-2H5v2l-5 3 4-8c0-3 1-6 3-8Z" fill={W} /><path d="M13 1l-3 5h3l-1 4 5-6h-3Z" fill={W} /></>,
  annoC: <path d="M8 1c3 4 3 7 3 8l5 7-5-2v-2H6v2l-5 3 4-8c0-3 1-6 3-9Z" fill={W} />,
  gear: <><circle cx="8.500" cy="8.500" r="4.500" stroke={W} strokeWidth="3.500" /><path d="M8.500 0v3M8.500 14v3M0 8.500h3M14 8.500h3M2.500 2.500l2 2M12.500 12.500l2 2M2.500 14.500l2-2M12.500 4.500l2-2" stroke={W} strokeWidth="3" /></>,
  plus: <path d="M8.500 1v16M.500 9h16" stroke={W} strokeWidth="1.800" />,
  ruler: <path d="M5 1h8v2h-3v1h3v1h-2v1h2v3h-3v1h3v3h-2v1h2v3H5Z" fill={W} />,
  qprop: <><rect x="3" y="1.500" width="12" height="15" stroke={W} strokeWidth="1.200" /><path d="M3 3h12" stroke={W} strokeWidth="2" /><path d="M5 7.500h2M5 10.500h2M5 13.500h2M9 7.500h4M9 10.500h4M9 13.500h4" stroke={W} /></>,
  lockui: <><path d="M8 13.500H1.500v-12h13V7M1 3h14M4 14v2" stroke={W} strokeWidth="1.300" /><rect x="8" y="11" width="8" height="6" fill={W} /><path d="M12 11V8c0-1 4-1 4 1" stroke={W} /></>,
  isolate: <><rect x="1" y="1" width="6" height="6" stroke={W} strokeWidth="1.200" /><circle cx="13.500" cy="9" r="3.300" stroke={W} strokeWidth="1.200" /><path d="M7 10l3.500 6h-7Z" stroke={W} strokeWidth="1.200" /></>,
  hw: <><rect x="1.500" y="1.500" width="15" height="15" stroke="#2f7cc4" strokeWidth="2" strokeDasharray="2 1" /><rect x="4.500" y="4.500" width="6" height="6" stroke="#3b8fdd" strokeWidth="2" /><rect x="8" y="8" width="6" height="6" stroke="#3b8fdd" strokeWidth="2" /></>,
  perf: <><circle cx="9" cy="9" r="7.500" fill="#8fb7e2" stroke="#fff" strokeWidth="1.300" /><path d="M9 9l4-4M5 13h8" stroke="#fff" strokeWidth="1.300" /></>,
  clean: <><rect x="1" y="3.500" width="16" height="11" stroke={W} strokeWidth="1.300" /><path d="M10 6h4v4ZM4 8v4h4Z" fill={W} /></>,
  ham: <path d="M1 3h16M1 9h16M1 15h16" stroke={W} strokeWidth="2" />,
  grid: <path d="M5.500 2v14M9.500 2v14M13.500 2v14M2 5.500h15M2 9.500h15M2 13.500h15" stroke={W} />,
  snap: <g fill={W}><path d="M3 3h2v2H3ZM8 3h2v2H8ZM13 3h2v2h-2ZM3 8h2v2H3ZM8 8h2v2H8ZM13 8h2v2h-2ZM3 13h2v2H3ZM8 13h2v2H8ZM13 13h2v2h-2Z" /></g>,
};

function Cell({ n, on, br, className = "w-6" }) {
  return (
    <button
      type="button"
      aria-label={n}
      aria-pressed={!!on}
      className={`flex items-center justify-center p-px ${br ? "border-r border-[#7d7d7d]" : ""} ${className}`}
    >
      <span className={`flex h-full w-full items-center justify-center ${on ? "bg-[#5c90cc]" : ""}`}>
        <Svg s={18}>{S[n]}</Svg>
      </span>
    </button>
  );
}
function Arrow({ className = "w-[15px]", br }) {
  return (
    <button type="button" aria-label="选项" className={`flex items-center justify-center ${br ? "border-r border-[#7d7d7d]" : ""} ${className}`}>
      <Down w={8} />
    </button>
  );
}
const Group = ({ children }) => <div className="flex h-full shrink-0 border border-[#7d7d7d] bg-[#4e4e4e]">{children}</div>;
const selectCls = "appearance-none border-0 bg-transparent text-xs text-white outline-none";

function Status() {
  return (
    <footer className="bg-[#373737] text-xs text-white">
      <div className="flex h-7 items-start">
        <nav className="flex pl-[10px] pt-px">
          <button type="button" className="h-[17px] w-[50px] bg-gradient-to-b from-[#5a5a5a] to-[#8a8a8a] font-medium leading-[17px] [clip-path:polygon(0_0,100%_0,88%_88%,82%_100%,14%_100%,9%_88%)]">模型</button>
          <button type="button" className="h-[17px] w-[52px] bg-gradient-to-b from-[#484848] to-[#666] leading-[17px] text-[#bdbdbd] [clip-path:polygon(0_0,100%_0,88%_88%,82%_100%,14%_100%,9%_88%)]">布局1</button>
          <button type="button" aria-label="新建布局" className="ml-1 flex h-[17px] w-6 items-center justify-center bg-[#555] [clip-path:polygon(25%_0,100%_0,88%_70%,70%_100%,0_100%,0_85%)]">
            <Svg s={9}><path d="M4.500 0v9M0 4.500h9" stroke="#c8c8c8" strokeWidth="2" /></Svg>
          </button>
        </nav>
        <div className="ml-auto mr-px flex h-full pb-px pt-px">
          <Group>
            <label className="flex w-[70px] items-center border-r border-[#7d7d7d] pl-px">
              <select aria-label="比例" className={`${selectCls} w-14`}><option>比例 1:100</option></select>
              <span className="ml-[2px]"><Down w={7} /></span>
            </label>
            <output className="flex w-[140px] items-center justify-end pr-[5px] text-xs">53168, 15104, 0</output>
          </Group>
          <div className="w-px" />
          <Group>
            <button type="button" className="w-[28px] border-r border-[#7d7d7d] font-medium">模型</button>
            <Cell n="grid" className="w-[25px]" /><Cell n="snap" className="w-[25px]" /><Arrow />
          </Group>
        </div>
      </div>
      <div className="mr-px flex h-[27px] justify-end gap-px overflow-hidden">
        <Group>
          <Cell n="model" br className="w-[25px]" /><Cell n="infer" on br className="w-[25px]" /><Cell n="ortho" br className="w-[25px]" />
          <Cell n="polar" on /><Arrow /><Cell n="iso" /><Arrow br />
          <Cell n="track" on /><Cell n="osnap" on br={false} /><Arrow br />
          <Cell n="lwt" br className="w-[26px]" /><Cell n="trans" on br className="w-[25px]" /><Cell n="cycle" br className="w-[25px]" />
          <Cell n="osnap3d" /><Arrow />
        </Group>
        <Group>
          <Cell n="ducs" on /><Cell n="filter" /><Arrow /><Cell n="gizmo" on /><Arrow className="w-4" />
        </Group>
        <Group>
          <Cell n="annoA" on /><Cell n="annoB" /><Cell n="annoC" />
          <select aria-label="注释比例" className={`${selectCls} ml-px w-[58px]`}><option>1:1 / 100%</option></select>
          <Arrow className="w-[14px]" />
        </Group>
        <Group>
          <Cell n="gear" /><Arrow br className="w-4" /><Cell n="plus" />
        </Group>
        <Group>
          <Cell n="ruler" />
          <select aria-label="单位" className={`${selectCls} ml-[5px] w-[54px] font-medium`}><option>小数</option></select>
          <Arrow br /><Cell n="qprop" />
        </Group>
        <Group>
          <Cell n="lockui" /><Arrow br /><Cell n="isolate" /><Cell n="hw" />
        </Group>
        <Group><Cell n="perf" on /></Group>
        <Group><Cell n="clean" /><Cell n="ham" /></Group>
      </div>
    </footer>
  );
}

const tabs = ["默认", "插入", "注释", "参数化", "视图", "管理", "输出", "附加模块", "协作", "精选应用", "天正电气"];

function Watermark() {
  return (
    <div className="pointer-events-none absolute left-[3px] top-[9px] flex" aria-hidden="true">
      <svg width="58" height="58" viewBox="0 0 58 58" className="opacity-80">
        <path d="M2 34A27 27 0 0 1 57 28C50 22 42 17 32 17 18 17 8 26 2 34Z" fill="#2f8fd4" />
        <path d="M3 34A27 27 0 0 0 57 28C50 34 48 40 40 46V24H26V44L14 38C8 42 5 38 3 34Z" fill="#e8912c" />
        <path d="M2 34C10 16 30 8 48 18 34 14 20 20 15 30c-2 6 0 9 6 9-10 4-18 2-19-5Z" fill="#1f7cc8" />
        <path d="M12 32c6-1 8-9 15-11v10h6V19l8-5v16h11v6H40v20h-7V36h-6v20h-7V38c-4 1-8-1-8-6Z" fill="#eceff2" />
        <path d="M10 20 16 5l8 18-12 12Z" fill="#b0566e" opacity=".6" />
      </svg>
      <div className="ml-1 leading-none">
        <div className="pt-[7px] text-[27px] font-black leading-[28px] text-[#1e84d2] opacity-70">河东软件园</div>
        <div className="pt-[3px] font-['Liberation_Serif',serif] text-[20px] font-bold leading-[20px] text-[#2a9a2a] opacity-75">www.pc0359.cn</div>
      </div>
    </div>
  );
}

export default function App() {
  return (
    <div className="flex min-h-screen flex-col bg-[#b9b4b8] px-px pb-[2px] pt-px font-['Roboto','Noto_Sans_CJK_SC',sans-serif] text-xs">
      <div className="relative flex flex-1 flex-col bg-[#5a5a5a]">
        <header>
          <TitleBar />
          <nav className="flex h-5 items-stretch border-y border-[#2d2d2d] bg-[#535353] pl-[45px]">
            {tabs.map((t, i) => (
              <button
                key={t}
                type="button"
                className={`whitespace-nowrap px-[10px] text-xs leading-[18px] ${i === 0 ? "-mb-px border-r border-[#333] bg-[#5c5c5c] pr-[9px] text-white" : "text-[#d0d0d0]"}`}
              >
                {t}
              </button>
            ))}
            <button type="button" aria-label="最小化功能区" className="ml-[22px] flex items-center gap-[6px]">
              <Svg w={14} h={8}><rect width="14" height="8" rx="2" fill="#e8e8e8" /><path d="M4 6h6L7 2Z" fill="#444" /></Svg>
              <Down w={5} />
            </button>
          </nav>
          <Ribbon />
        </header>
        <button type="button" aria-label="应用程序菜单" className="absolute left-px top-[7px] flex h-[41px] w-10 items-center justify-center border border-[#222] bg-gradient-to-b from-[#8c8c8c] to-[#555]">
          <Svg w={34} h={34}><path d="M3 29 9 2h8l9 27h-8l-5-17-4 17Z" fill="#c8202c" /><path d="M9 2l4 10-4 17H3Z" fill="#8f1620" /></Svg>
        </button>
        <main className="flex flex-1 pr-1">
          <Palette />
          <div className="w-[2px] shrink-0" />
          <VBar label="绘图" items={["line", "xline", "pline", "polygon", "rect", "arc", "circle", "cloud", "spline", "ellipse", "ellarc", "insert", "block", "point"]} />
          <div className="ml-[5px] mr-1 flex min-w-0 flex-1 flex-col">
            <Canvas />
            <PluginBar />
          </div>
          <VBar label="修改" items={["erase", "copy", "mirror", "offset", "move", "rotate", "scale", "stretch", "trim", "extend", "breakpt", "brk", "join", "chamfer"]} />
        </main>
        <Status />
        <Watermark />
      </div>
    </div>
  );
}
